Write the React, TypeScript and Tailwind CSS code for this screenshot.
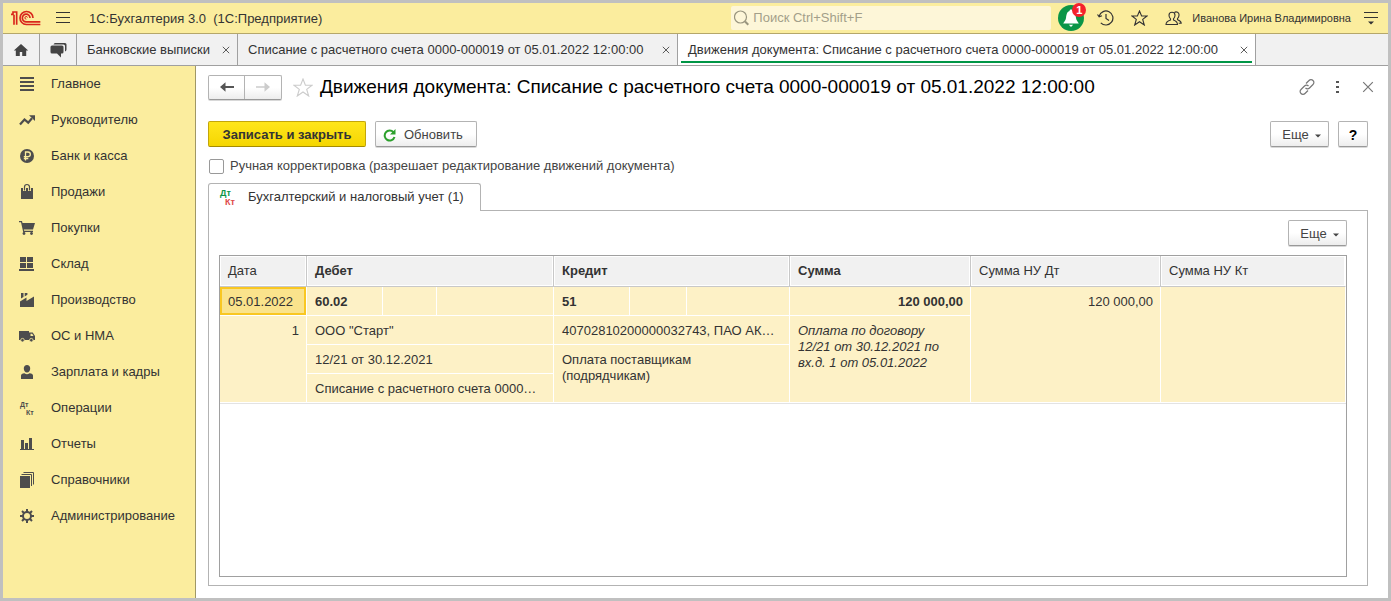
import type { ReactNode } from "react";

type IconProps = { children: ReactNode };

function MenuIcon({ children }: IconProps) {
  return (
    <svg width="16" height="16" viewBox="0 0 16 16" fill="#4d4d4d" aria-hidden="true" className="shrink-0 overflow-visible">
      {children}
    </svg>
  );
}

const sections: { label: string; icon: ReactNode }[] = [
  {
    label: "Главное",
    icon: <path d="M1 1h14v2H1zM1 5h14v2H1zM1 9h14v2H1zM1 13h14v2H1z" />,
  },
  {
    label: "Руководителю",
    icon: (
      <>
        <path d="M1 12.500 5.500 7.500l3.700 3.100L13 6.200" fill="none" stroke="#4d4d4d" strokeWidth="2.200" />
        <path d="M10 3.300h6V9z" />
      </>
    ),
  },
  {
    label: "Банк и касса",
    icon: (
      <>
        <circle cx="8" cy="8" r="7" />
        <path d="M6.500 12.500V4H9a2.300 2.300 0 0 1 0 4.700H4.800M4.800 10.500h4.500" fill="none" stroke="#fbed9e" strokeWidth="1.300" />
      </>
    ),
  },
  {
    label: "Продажи",
    icon: (
      <>
        <path d="M2 4h12v11H2z" />
        <path d="M5.500 7V3a2.500 2.500 0 0 1 5 0v4" fill="none" stroke="#fbed9e" strokeWidth="3" />
        <path d="M5.500 6.500V3a2.500 2.500 0 0 1 5 0v3.500" fill="none" stroke="#4d4d4d" strokeWidth="1.200" />
      </>
    ),
  },
  {
    label: "Покупки",
    icon: (
      <>
        <path d="M0 1h3l.5 2H16l-2 6.500H4.800l.4 1.200H14v1.300H4.200L2 2.300H0z" />
        <circle cx="5" cy="13.500" r="1.400" />
        <circle cx="12.500" cy="13.500" r="1.400" />
      </>
    ),
  },
  {
    label: "Склад",
    icon: <path d="M1 1h6v5H1zM8 1h6v5H8zM1 7h6v5H1zM8 7h6v5H8zM0 13h15v2H0z" />,
  },
  {
    label: "Производство",
    icon: <path d="M1 15V9.500l6.500-4V9L15 4.500V15zM2 1h2.500v4L2 6.500zM5.700 1h2.700v1.800L5.700 4.500z" />,
  },
  {
    label: "ОС и НМА",
    icon: (
      <>
        <path d="M0 3h10v9H0zM9.500 4.500h4.200L16 8v4H9.500z" />
        <path d="M11.500 5.800h1.700L14.500 8h-3z" fill="#fbed9e" />
        <circle cx="3.500" cy="12.200" r="1.800" stroke="#fbed9e" strokeWidth=".8" />
        <circle cx="12.300" cy="12.200" r="1.800" stroke="#fbed9e" strokeWidth=".8" />
      </>
    ),
  },
  {
    label: "Зарплата и кадры",
    icon: <path d="M8 1a3.200 3.200 0 0 1 3.200 3.500C11.200 6.800 10 8.500 8 8.500S4.800 6.800 4.800 4.500A3.200 3.200 0 0 1 8 1zM2 15v-3.500Q2 9.800 5.500 9.300 8 11 10.500 9.300 14 9.800 14 11.500V15z" />,
  },
  {
    label: "Операции",
    icon: (
      <g fontSize="7" fontWeight="700" fontFamily="Liberation Sans, sans-serif">
        <text x="1" y="7">Дт</text>
        <text x="7" y="15">Кт</text>
      </g>
    ),
  },
  {
    label: "Отчеты",
    icon: <path d="M2 4h3v9H2zM6 7h3v6H6zM10 2h3v11h-3zM1 13h14v1H1z" />,
  },
  {
    label: "Справочники",
    icon: (
      <>
        <path d="M1 4h10v12H1z" />
        <path d="M2.500 2.500H12.500V14M4.500.5H14.500V12.500" fill="none" stroke="#4d4d4d" />
      </>
    ),
  },
  {
    label: "Администрирование",
    icon: (
      <>
        <circle cx="8" cy="8" r="4" fill="none" stroke="#4d4d4d" strokeWidth="2" />
        <path
          d="M8 1v3M8 12v3M1 8h3M12 8h3M3 3l2.200 2.200M10.800 10.800 13 13M13 3l-2.200 2.200M5.200 10.800 3 13"
          stroke="#4d4d4d"
          strokeWidth="2"
        />
      </>
    ),
  },
];

function Logo() {
  return (
    <svg width="30" height="16" viewBox="0 0 90 48" fill="none" stroke="#d9261c" strokeWidth="5" aria-label="1С">
      <path d="M0 13h6V6h11v38M9 14v30" />
      <path d="M66 24A19.500 19.500 0 1 0 46 43.500H88" />
      <path d="M57 24A11.500 11.500 0 1 0 46 35.500H88" />
      <path d="M46 27.500a4 4 0 1 1 3.500-5" strokeWidth="3" />
    </svg>
  );
}

function CloseMark({ size }: { size: number }) {
  return (
    <svg width={size} height={size} viewBox="0 0 10 10" stroke="currentColor" fill="none" aria-hidden="true">
      <path d="M1 1l8 8M9 1 1 9" />
    </svg>
  );
}

function Tab({ label, width, active = false }: { label: string; width: string; active?: boolean }) {
  return (
    <div className={`flex border-r border-[#a0a0a0] px-[3px] ${width} ${active ? "bg-white" : ""}`}>
      <div
        className={`mb-0.5 flex flex-1 items-center justify-between gap-2 border-b-2 pt-1 pr-1 pl-[7px] ${active ? "border-[#009646]" : "border-transparent"}`}
      >
        <button type="button" className="whitespace-nowrap">{label}</button>
        <button type="button" aria-label="Закрыть вкладку" className="text-[#333]">
          <CloseMark size={8} />
        </button>
      </div>
    </div>
  );
}

const buttonLook =
  "rounded-[2px] border border-[#b3b3b3] border-b-[#999] bg-linear-to-b from-white from-50% to-[#ededed] shadow-[0_1px_0_#d8d8d8]";

function MoreButton() {
  return (
    <button type="button" className={`${buttonLook} flex h-[26px] w-[59px] items-center justify-center gap-1.5 pt-0.5 pl-1 text-[#444]`}>
      Еще
      <svg width="6" height="4" viewBox="0 0 6 4" fill="#444" aria-hidden="true" className="mt-0.5">
        <path d="M0 .5h6L3 3.500z" />
      </svg>
    </button>
  );
}

const head = "h-[31px] border-r border-b border-[#c8c8c8] bg-[#f1f1f1] px-2 text-left shadow-[inset_0_0_0_1px_#fff]";
const box = "h-[29px] border-r border-b border-white bg-[#fdf1c6]";
const cell = `${box} px-2 pt-0.5`;
const clipped = `${box} truncate pt-0.5 pr-2 pl-2`;
const number = `${box} pr-[7px] pl-2 text-right`;

function EntriesTable() {
  return (
    <table className="w-full table-fixed border-separate border-spacing-0 border-b border-[#e3e3e3]">
      <colgroup>
        <col className="w-[87px]" />
        <col className="w-[76px]" />
        <col className="w-[54px]" />
        <col className="w-[117px]" />
        <col className="w-[76px]" />
        <col className="w-[57px]" />
        <col className="w-[103px]" />
        <col className="w-[181px]" />
        <col className="w-[190px]" />
        <col />
      </colgroup>
      <thead>
        <tr>
          <th className={`${head} font-normal`}>Дата</th>
          <th colSpan={3} className={`${head} font-bold`}>Дебет</th>
          <th colSpan={3} className={`${head} font-bold`}>Кредит</th>
          <th className={`${head} font-bold`}>Сумма</th>
          <th className={`${head} font-normal`}>Сумма НУ Дт</th>
          <th className={`${head} border-r-white font-normal`}>Сумма НУ Кт</th>
        </tr>
      </thead>
      <tbody>
        <tr>
          <td className="h-[29px] border-r border-b border-white bg-[#fae38c] px-2 pt-0.5 shadow-[inset_0_0_0_2px_#f9c722]">05.01.2022</td>
          <td className={`${cell} font-bold`}>60.02</td>
          <td className={cell} />
          <td className={cell} />
          <td className={`${cell} font-bold`}>51</td>
          <td className={cell} />
          <td className={cell} />
          <td className={`${number} pt-0.5 font-bold`}>120 000,00</td>
          <td rowSpan={4} className={`${number} pt-[7px] align-top`}>120 000,00</td>
          <td rowSpan={4} className={cell} />
        </tr>
        <tr>
          <td rowSpan={3} className={`${number} pt-[7px] align-top`}>1</td>
          <td colSpan={3} className={clipped}>ООО "Старт"</td>
          <td colSpan={3} className={clipped}>40702810200000032743, ПАО АК…</td>
          <td rowSpan={3} className={`${box} pt-[7px] pr-6 pl-2 align-top italic`}>
            Оплата по договору 12/21 от 30.12.2021 по вх.д. 1 от 05.01.2022
          </td>
        </tr>
        <tr>
          <td colSpan={3} className={clipped}>12/21 от 30.12.2021</td>
          <td colSpan={3} rowSpan={2} className={`${box} px-2 pt-[7px] align-top`}>
            Оплата поставщикам
            <br />
            (подрядчикам)
          </td>
        </tr>
        <tr>
          <td colSpan={3} className={clipped}>Списание с расчетного счета 0000…</td>
        </tr>
      </tbody>
    </table>
  );
}

export default function App() {
  return (
    <div className="flex min-h-screen flex-col border-[3px] border-[#c0c0c0] bg-white font-['Liberation_Sans',Arial,sans-serif] text-[13px] leading-4 text-[#333]">
      <header className="flex h-[31px] items-center border-b border-[#b5a76a] bg-[#fbed9e] pr-2.5 pl-2">
        <Logo />
        <button type="button" aria-label="Меню" className="ml-[15px]">
          <svg width="14" height="12" viewBox="0 0 14 12" fill="#333" aria-hidden="true">
            <path d="M0 0h14v1H0zM0 5h14v1H0zM0 10h14v1H0z" />
          </svg>
        </button>
        <span className="ml-[19px] pt-0.5 whitespace-pre">1С:Бухгалтерия 3.0  (1С:Предприятие)</span>
        <label className="ml-auto flex h-6 w-80 items-center gap-1 rounded-[2px] bg-[#fdf6d8] px-[3px]">
          <svg width="15" height="16" viewBox="0 0 15 16" fill="none" stroke="#99957f" aria-hidden="true">
            <circle cx="6.500" cy="7" r="6" strokeWidth="1.200" />
            <path d="m11 11.500 3.300 3.300" strokeWidth="2" />
          </svg>
          <input
            type="search"
            aria-label="Поиск"
            placeholder="Поиск Ctrl+Shift+F"
            className="min-w-0 flex-1 bg-transparent text-[13px] outline-none placeholder:text-[#a39f8a]"
          />
        </label>
        <button type="button" aria-label="Уведомления" className="relative ml-[7px]">
          <svg width="26" height="26" viewBox="0 0 26 26" aria-hidden="true" className="block">
            <circle cx="13" cy="13" r="13" fill="#0b9547" />
            <path d="M13 4.500c1 0 1.500.7 1.500 1.600C17.300 7 17.500 10 18 13c.3 2 1.500 3.500 2.800 5.500H5.200C6.500 16.500 7.700 15 8 13c.5-3 .7-6 3.500-6.900 0-.9.5-1.600 1.500-1.600zM10.800 19.800h4.400L13 22z" fill="#fff" />
          </svg>
          <span className="absolute -top-0.5 -right-0.5 flex size-[14px] items-center justify-center rounded-full bg-[#f5222d] text-[11px] font-bold text-white">1</span>
        </button>
        <button type="button" aria-label="История" className="ml-[13px]">
          <svg width="17" height="16" viewBox="0 0 17 16" fill="none" stroke="#333" strokeWidth="1.200" aria-hidden="true">
            <path d="M2.200 6A7 7 0 1 1 3.800 12.800M.5 4.500 2.200 6.800l2.800-1M9 4v4.500l3 2" />
          </svg>
        </button>
        <button type="button" aria-label="Избранное" className="ml-[17px]">
          <svg width="17" height="16" viewBox="0 0 17 16" fill="none" stroke="#333" strokeWidth="1.100" aria-hidden="true">
            <path d="m8.500 1 2.100 5h5.400l-4.300 3.400 1.600 5.600-4.800-3.300L3.700 15l1.600-5.600L1 6h5.400z" />
          </svg>
        </button>
        <button type="button" aria-label="Пользователь" className="ml-[17px]">
          <svg width="17" height="15" viewBox="0 0 17 15" fill="none" stroke="#333" strokeWidth="1.100" aria-hidden="true">
            <path d="M5.500 9V7.800C4.200 6.500 4 5.500 4 4.300a3 3 0 0 1 6 0c0 1.200-.2 2.200-1.500 3.500V9c2.500.9 4 1.600 4 4.500H1C1 10.600 3 9.900 5.500 9z" />
            <path d="M9.300 1.600A2.900 2.900 0 0 1 14 4.300c0 1.200-.5 2.300-1.500 3.300v1c2.300.9 3.700 1.400 3.700 3.600h-2.500" />
          </svg>
        </button>
        <a href="#user" className="ml-2.5 text-[11px] whitespace-nowrap">Иванова Ирина Владимировна</a>
        <button type="button" aria-label="Настройки" className="ml-[13px]">
          <svg width="14" height="14" viewBox="0 0 14 14" fill="#333" aria-hidden="true">
            <path d="M0 1h14v1H0zM0 6h14v1H0zM4 10.500h6L7 13.500z" />
          </svg>
        </button>
      </header>

      <div className="flex h-8 border-b border-[#a0a0a0] bg-[#f1f1f1]">
        <button type="button" aria-label="Начальная страница" className="flex w-[37px] items-center justify-center border-r border-[#a0a0a0]">
          <svg width="16" height="14" viewBox="0 0 16 14" fill="#444" aria-hidden="true">
            <path d="M8 1 .8 7.500h2V13h4V9h2.400v4h4V7.500h2z" />
          </svg>
        </button>
        <button type="button" aria-label="Обсуждения" className="flex w-[37px] items-center justify-center border-r border-[#a0a0a0]">
          <svg width="17" height="16" viewBox="0 0 17 16" fill="#444" aria-hidden="true">
            <path d="M5 1h10q1.500 0 1.500 1.500v5q0 1.500-1.500 2V4q0-1.500-1.500-1.500h-10Q4 1 5 1z" />
            <path d="M2 3.500h10q1.500 0 1.500 1.500v5q0 1.500-1.500 1.500h-1V15.500L7 11.500H2Q.5 11.500.5 10V5Q.5 3.500 2 3.500z" />
          </svg>
        </button>
        <Tab width="min-w-[161px]" label="Банковские выписки" />
        <Tab width="min-w-[440px]" label="Списание с расчетного счета 0000-000019 от 05.01.2022 12:00:00" />
        <Tab active width="min-w-[578px]" label="Движения документа: Списание с расчетного счета 0000-000019 от 05.01.2022 12:00:00" />
      </div>

      <div className="flex flex-1">
        <nav className="flex w-[193px] shrink-0 flex-col border-r border-[#a09866] bg-[#fbed9e]">
          {sections.map(({ label, icon }) => (
            <a key={label} href="#section" className="flex h-9 items-center gap-4 pl-4 whitespace-nowrap">
              <MenuIcon>{icon}</MenuIcon>
              {label}
            </a>
          ))}
        </nav>

        <main className="flex min-w-0 flex-1 flex-col pt-[9px] pr-5 pb-3 pl-3">
          <div className="-mr-1.5 flex h-6 items-center">
            <div className={`${buttonLook} flex h-[25px]`}>
              <button type="button" aria-label="Назад" className="flex w-9 items-center justify-center border-r border-[#b3b3b3]">
                <svg width="14" height="10" viewBox="0 0 14 10" fill="#555" aria-hidden="true">
                  <path d="M0 5 5.500.3V4H14v2H5.500v3.700z" />
                </svg>
              </button>
              <button type="button" aria-label="Вперед" className="flex w-9 items-center justify-center">
                <svg width="14" height="10" viewBox="0 0 14 10" fill="#ccc" aria-hidden="true">
                  <path d="M14 5 8.500.3v4H0v1.400h8.500v4z" />
                </svg>
              </button>
            </div>
            <button type="button" aria-label="В избранное" className="ml-[11px]">
              <svg width="20" height="19" viewBox="0 0 20 19" fill="none" stroke="#ccc" strokeWidth="1.100" aria-hidden="true">
                <path d="m10 1 2.400 6.300H19l-5.300 4.100 2 6.600-5.700-4-5.700 4 2-6.600L1 7.300h6.600z" />
              </svg>
            </button>
            <h1 className="ml-[7px] text-[19px] leading-6 whitespace-nowrap text-black">
              Движения документа: Списание с расчетного счета 0000-000019 от 05.01.2022 12:00:00
            </h1>
            <div className="ml-auto flex items-center text-[#777]">
              <button type="button" aria-label="Получить ссылку">
                <svg width="16" height="16" viewBox="0 0 16 16" fill="none" stroke="currentColor" strokeWidth="1.200" aria-hidden="true">
                  <path d="m7 4.500 3-3a2.700 2.700 0 0 1 4 0 2.700 2.700 0 0 1 0 4l-3.500 3.500a2.700 2.700 0 0 1-4 0M9 11.500l-3 3a2.700 2.700 0 0 1-4 0 2.700 2.700 0 0 1 0-4L5.500 7a2.700 2.700 0 0 1 4 0" />
                </svg>
              </button>
              <button type="button" aria-label="Действия" className="ml-[21px]">
                <svg width="3" height="12" viewBox="0 0 3 12" fill="#555" aria-hidden="true">
                  <path d="M0 0h3v2H0zM0 5h3v2H0zM0 10h3v2H0z" />
                </svg>
              </button>
              <button type="button" aria-label="Закрыть" className="ml-[23px]">
                <CloseMark size={12} />
              </button>
            </div>
          </div>

          <div className="mt-[22px] flex h-[26px] gap-[9px]">
            <button type="button" className="w-[158px] rounded-[2px] border border-[#c3a60a] border-b-[#a58c00] bg-linear-to-b from-[#ffe61a] to-[#f5d600] pt-0.5 font-bold whitespace-nowrap">
              Записать и закрыть
            </button>
            <button type="button" className={`${buttonLook} flex w-[102px] items-center gap-2 pt-0.5 pl-[7px] whitespace-nowrap text-[#444]`}>
              <svg width="13" height="13" viewBox="0 0 13 13" fill="none" aria-hidden="true">
                <path d="M10.500 3.300A5 5 0 1 0 11.500 8" stroke="#2ca02c" strokeWidth="2" />
                <path d="M12.500 0v5.500H7z" fill="#2ca02c" />
              </svg>
              Обновить
            </button>
            <div className="ml-auto flex gap-[9px]">
              <MoreButton />
              <button type="button" aria-label="Справка" className={`${buttonLook} w-[30px] pt-0.5 text-[14px] font-bold text-black`}>?</button>
            </div>
          </div>

          <label className="mt-[11px] flex items-center gap-1.5 text-[#444]">
            <input type="checkbox" className="ml-px size-[15px] appearance-none rounded-[2px] border border-[#999] bg-white" />
            Ручная корректировка (разрешает редактирование движений документа)
          </label>

          <div className="mt-[9px] flex">
            <button type="button" className="z-10 -mb-px flex h-7 items-center gap-2.5 rounded-t-[3px] border border-b-0 border-[#b3b3b3] bg-white pr-4 pb-0.5 pl-[11px] whitespace-nowrap">
              <svg width="18" height="18" viewBox="0 0 18 18" fontSize="9" fontWeight="700" fontFamily="Liberation Sans, sans-serif" aria-hidden="true" className="overflow-visible">
                <text x="0" y="8" fill="#0b9547">Дт</text>
                <text x="5" y="17" fill="#e04a4a">Кт</text>
              </svg>
              Бухгалтерский и налоговый учет (1)
            </button>
          </div>
          <section className="flex flex-1 flex-col border border-[#b3b3b3] pt-[9px] pr-5 pb-2 pl-2.5">
            <div className="flex justify-end pb-[9px]">
              <MoreButton />
            </div>
            <div className="flex-1 border border-[#a0a0a0]">
              <EntriesTable />
            </div>
          </section>
        </main>
      </div>
    </div>
  );
}
